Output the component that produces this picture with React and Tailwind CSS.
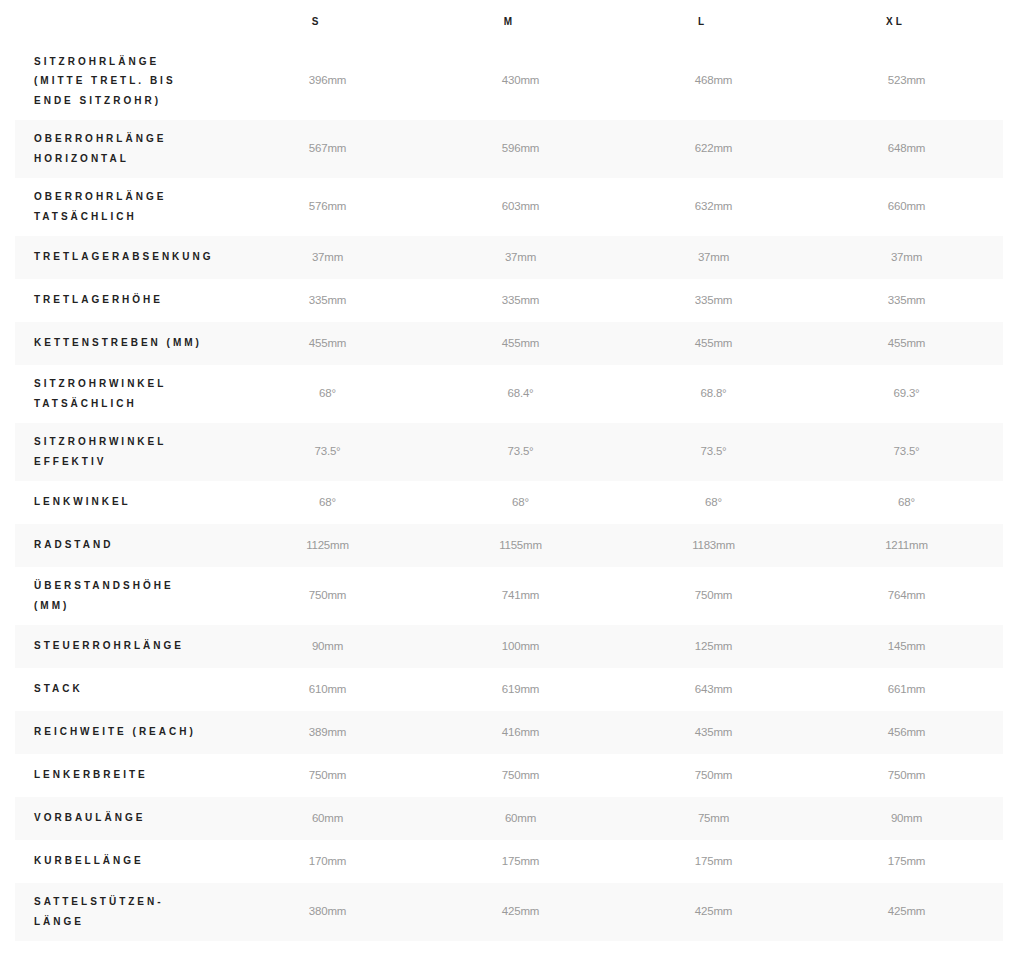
const sizes = ["S", "M", "L", "XL"]

const rows = [
  { label: ["SITZROHRLÄNGE", "(MITTE TRETL. BIS", "ENDE SITZROHR)"], values: ["396mm", "430mm", "468mm", "523mm"] },
  { label: ["OBERROHRLÄNGE", "HORIZONTAL"], values: ["567mm", "596mm", "622mm", "648mm"] },
  { label: ["OBERROHRLÄNGE", "TATSÄCHLICH"], values: ["576mm", "603mm", "632mm", "660mm"] },
  { label: ["TRETLAGERABSENKUNG"], values: ["37mm", "37mm", "37mm", "37mm"] },
  { label: ["TRETLAGERHÖHE"], values: ["335mm", "335mm", "335mm", "335mm"] },
  { label: ["KETTENSTREBEN (MM)"], values: ["455mm", "455mm", "455mm", "455mm"] },
  { label: ["SITZROHRWINKEL", "TATSÄCHLICH"], values: ["68°", "68.4°", "68.8°", "69.3°"] },
  { label: ["SITZROHRWINKEL", "EFFEKTIV"], values: ["73.5°", "73.5°", "73.5°", "73.5°"] },
  { label: ["LENKWINKEL"], values: ["68°", "68°", "68°", "68°"] },
  { label: ["RADSTAND"], values: ["1125mm", "1155mm", "1183mm", "1211mm"] },
  { label: ["ÜBERSTANDSHÖHE", "(MM)"], values: ["750mm", "741mm", "750mm", "764mm"] },
  { label: ["STEUERROHRLÄNGE"], values: ["90mm", "100mm", "125mm", "145mm"] },
  { label: ["STACK"], values: ["610mm", "619mm", "643mm", "661mm"] },
  { label: ["REICHWEITE (REACH)"], values: ["389mm", "416mm", "435mm", "456mm"] },
  { label: ["LENKERBREITE"], values: ["750mm", "750mm", "750mm", "750mm"] },
  { label: ["VORBAULÄNGE"], values: ["60mm", "60mm", "75mm", "90mm"] },
  { label: ["KURBELLÄNGE"], values: ["170mm", "175mm", "175mm", "175mm"] },
  { label: ["SATTELSTÜTZEN-", "LÄNGE"], values: ["380mm", "425mm", "425mm", "425mm"] },
]

export default function App() {
  return (
    <div className="min-h-screen bg-white px-[15px] pb-[14px] font-['Liberation_Sans',Arial,sans-serif]">
      <table className="w-[988px] border-collapse table-fixed">
        <colgroup>
          <col className="w-[216px]" />
          <col className="w-[193px]" />
          <col className="w-[193px]" />
          <col className="w-[193px]" />
          <col className="w-[193px]" />
        </colgroup>
        <thead>
          <tr className="h-[42px]">
            <th />
            {sizes.map((s) => (
              <th
                key={s}
                className="pr-[22px] text-center align-middle text-[10px] font-bold leading-[19px] tracking-[3px] text-[#222]"
              >
                {s}
              </th>
            ))}
          </tr>
        </thead>
        <tbody>
          {rows.map((row, i) => (
            <tr key={i} className={i % 2 === 1 ? "bg-[#f9f9f9]" : "bg-white"}>
              <td className="pl-[19px] py-[9.5px] align-middle text-[10px] font-bold leading-[19.5px] tracking-[3px] text-[#222] whitespace-nowrap">
                {row.label.map((l, j) => (
                  <div key={j}>{l}</div>
                ))}
              </td>
              {row.values.map((v, j) => (
                <td
                  key={j}
                  className="py-[12px] text-center align-middle text-[11.5px] leading-[19px] tracking-[-0.2px] text-[#9a9a9a]"
                >
                  {v}
                </td>
              ))}
            </tr>
          ))}
        </tbody>
      </table>
    </div>
  )
}
